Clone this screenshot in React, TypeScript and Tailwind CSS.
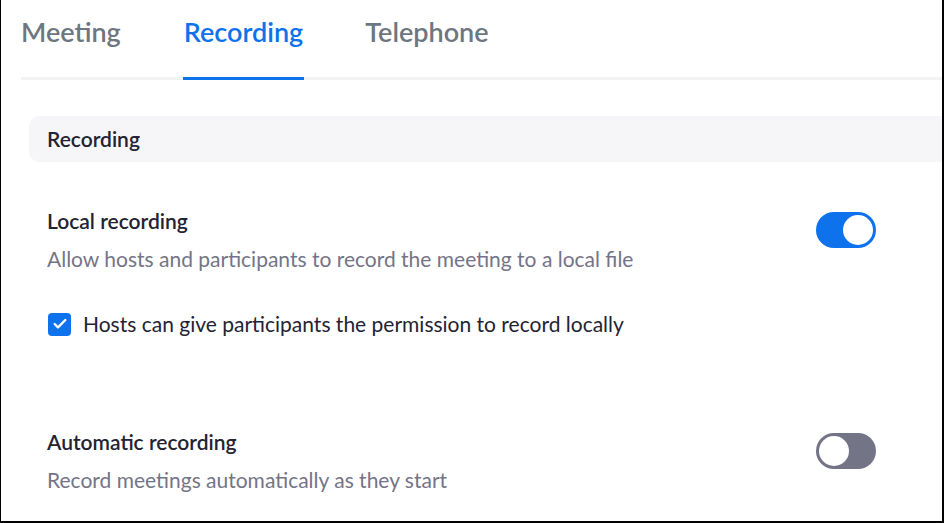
import { Check } from 'lucide-react';

function Toggle({ on }: { on: boolean }) {
  return (
    <div
      className={`flex h-[36px] w-[60px] shrink-0 items-center rounded-full p-[3px] ${
        on ? 'justify-end bg-[#0e72ed]' : 'justify-start bg-[#747487]'
      }`}
    >
      <div className="h-[30px] w-[30px] rounded-full bg-white" />
    </div>
  );
}

function Setting({ title, desc, on }: { title: string; desc: string; on: boolean }) {
  return (
    <div className="flex items-start justify-between pr-[66px]">
      <div>
        <div className="text-[21px] font-semibold leading-[26px] text-[#232333]">{title}</div>
        <div className="mt-[12px] text-[21px] leading-[26px] text-[#747487]">{desc}</div>
      </div>
      <div className="mt-[4px]">
        <Toggle on={on} />
      </div>
    </div>
  );
}

export default function App() {
  return (
    <div
      className="h-[523px] w-[944px] overflow-hidden border-b-2 border-l border-r-2 border-black bg-white"
      style={{ fontFamily: 'Lato, "Noto Sans", sans-serif' }}
    >
      <div className="ml-[20px] flex border-b-[3px] border-[#f3f3f5] pt-[14px]">
        <div className="-ml-[2px] px-[2px] pb-[27px] text-[27px] font-semibold leading-[36px] text-[#6e7680]">Meeting</div>
        <div className="-mb-[3px] ml-[60px] border-b-[3px] border-[#0e72ed] px-[1px] pb-[27px] text-[27px] font-semibold leading-[36px] text-[#0e72ed]">
          Recording
        </div>
        <div className="ml-[59px] px-[2px] pb-[27px] text-[27px] font-semibold leading-[36px] text-[#6e7680]">Telephone</div>
      </div>

      <div className="mt-[36px] ml-[28px] flex h-[46px] items-center rounded-l-[10px] bg-[#f6f6f8] pl-[18px]">
        <span className="text-[21px] font-semibold text-[#232333]">Recording</span>
      </div>

      <div className="mt-[46px] pl-[46px]">
        <Setting title="Local recording" desc="Allow hosts and participants to record the meeting to a local file" on />

        <label className="mt-[39px] flex items-center gap-[12px]">
          <span className="ml-[1px] flex h-[23px] w-[23px] items-center justify-center rounded-[4px] bg-[#0e72ed]">
            <Check size={16} strokeWidth={3.5} color="white" />
          </span>
          <span className="text-[21px] leading-[26px] text-[#232333]">
            Hosts can give participants the permission to record locally
          </span>
        </label>

        <div className="mt-[92px]">
          <Setting title="Automatic recording" desc="Record meetings automatically as they start" on={false} />
        </div>
      </div>
    </div>
  );
}
